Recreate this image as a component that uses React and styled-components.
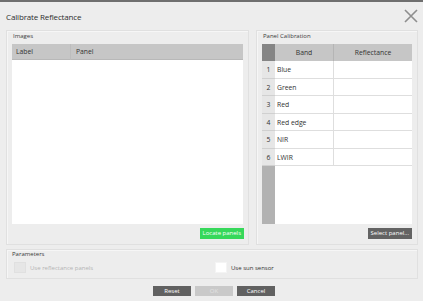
import styled, { createGlobalStyle } from 'styled-components';

const GlobalStyle = createGlobalStyle`
  html, body {
    margin: 0;
    padding: 0;
    background: #ededed;
  }
  * {
    box-sizing: border-box;
  }
`;

const bands = ['Blue', 'Green', 'Red', 'Red edge', 'NIR', 'LWIR'];

const App = () => {
  return (
    <Dialog>
      <GlobalStyle />
      <TitleBar>
        <Title>Calibrate Reflectance</Title>
        <CloseButton>
          <svg width="14" height="14" viewBox="0 0 14 14">
            <path d="M1 1 L13 13 M13 1 L1 13" stroke="#8e8e8e" strokeWidth="1.6" fill="none" />
          </svg>
        </CloseButton>
      </TitleBar>

      <Main>
        <Group width="243px">
          <GroupTitle>Images</GroupTitle>
          <ImagesTable>
            <ImagesHeader>
              <HeadCell first>Label</HeadCell>
              <HeadCell>Panel</HeadCell>
            </ImagesHeader>
          </ImagesTable>
          <GroupFooter>
            <SmallButton variant="green">Locate panels</SmallButton>
          </GroupFooter>
        </Group>

        <Group width="162px">
          <GroupTitle>Panel Calibration</GroupTitle>
          <BandTable>
            <Corner />
            <BandHead>Band</BandHead>
            <BandHead last>Reflectance</BandHead>
            {bands.map((b, i) => (
              <BandRow key={b}>
                <RowNum>{i + 1}</RowNum>
                <BandCell>{b}</BandCell>
                <BandCell last />
              </BandRow>
            ))}
            <Filler>
              <FillerStrip />
              <div />
            </Filler>
          </BandTable>
          <GroupFooter>
            <SmallButton variant="dark">Select panel...</SmallButton>
          </GroupFooter>
        </Group>
      </Main>

      <Params>
        <ParamsTitle>Parameters</ParamsTitle>
        <ParamsBody>
          <CheckWrap>
            <CheckBox disabled />
            <CheckLabel disabled>Use reflectance panels</CheckLabel>
          </CheckWrap>
          <CheckWrap>
            <CheckBox />
            <CheckLabel>Use sun sensor</CheckLabel>
          </CheckWrap>
        </ParamsBody>
      </Params>

      <ButtonBar>
        <DialogButton>Reset</DialogButton>
        <DialogButton disabled>OK</DialogButton>
        <DialogButton>Cancel</DialogButton>
      </ButtonBar>
    </Dialog>
  );
};
export default App;

const Dialog = styled.div`
  width: 423px;
  height: 301px;
  border-top: 2px solid #6f6f6f;
  background: #ededed;
  padding: 0 5px 0 6px;
  display: flex;
  flex-direction: column;
  font-family: 'Open Sans', 'Noto Sans', sans-serif;
  color: #333;
  overflow: hidden;
`;

const TitleBar = styled.div`
  height: 28px;
  display: flex;
  align-items: center;
  justify-content: space-between;
`;

const Title = styled.div`
  font-size: 8px;
  color: #2e2e2e;
  letter-spacing: -0.15px;
`;

const CloseButton = styled.div`
  width: 14px;
  height: 14px;
  display: flex;
`;

const Main = styled.div`
  display: flex;
  gap: 7px;
  height: 215px;
`;

const Group = styled.div`
  width: ${(p) => p.width};
  border: 1px solid #e0e0e0;
  box-shadow: inset 1px 1px 0 #f6f6f6;
  padding: 0 5px;
  display: flex;
  flex-direction: column;
`;

const GroupTitle = styled.div`
  height: 13px;
  line-height: 11px;
  font-size: 6px;
  color: #3a3a3a;
  padding-left: 1px;
`;

const GroupFooter = styled.div`
  flex: 1;
  display: flex;
  justify-content: flex-end;
  align-items: flex-start;
  padding-top: 4px;
`;

const SmallButton = styled.div`
  height: 11px;
  line-height: 11px;
  padding: 0 3px;
  font-size: 6px;
  color: #fff;
  background: ${(p) => (p.variant === 'green' ? '#36d85a' : '#636363')};
  margin-right: ${(p) => (p.variant === 'green' ? '-1px' : '0')};
`;

const ImagesTable = styled.div`
  height: 180px;
  background: #fff;
  display: flex;
  flex-direction: column;
`;

const ImagesHeader = styled.div`
  height: 16px;
  background: #c6c6c6;
  border-bottom: 1px solid #b8b8b8;
  display: grid;
  grid-template-columns: 59px 1fr;
`;

const HeadCell = styled.div`
  font-size: 6.8px;
  line-height: 16px;
  color: #333;
  padding-left: ${(p) => (p.first ? '4px' : '5px')};
  border-right: ${(p) => (p.first ? '1px solid #bdbdbd' : 'none')};
`;

const BandTable = styled.div`
  height: 180px;
  background: #fff;
  display: grid;
  grid-template-columns: 13px 59px 1fr;
  grid-template-rows: 17px repeat(6, 17.5px) 1fr;
`;

const Corner = styled.div`
  background: #858585;
`;

const BandHead = styled.div`
  background: #c6c6c6;
  font-size: 6.8px;
  line-height: 17px;
  text-align: center;
  color: #333;
  border-right: ${(p) => (p.last ? 'none' : '1px solid #b5b5b5')};
`;

const BandRow = styled.div`
  display: contents;
`;

const RowNum = styled.div`
  background: #e6e6e6;
  border-bottom: 1px solid #d0d0d0;
  font-size: 6.8px;
  line-height: 17px;
  text-align: center;
  color: #333;
`;

const BandCell = styled.div`
  border-bottom: 1px solid #dedede;
  border-right: ${(p) => (p.last ? 'none' : '1px solid #dedede')};
  font-size: 6.8px;
  line-height: 17px;
  padding-left: 2px;
  color: #333;
`;

const Filler = styled.div`
  grid-column: 1 / -1;
  display: grid;
  grid-template-columns: 13px 1fr;
`;

const FillerStrip = styled.div`
  background: #b2b2b2;
`;

const Params = styled.div`
  margin-top: 4px;
  height: 30px;
  border: 1px solid #e0e0e0;
  box-shadow: inset 1px 1px 0 #f6f6f6;
  display: flex;
  flex-direction: column;
`;

const ParamsTitle = styled.div`
  height: 9px;
  line-height: 8px;
  font-size: 6px;
  color: #3a3a3a;
  padding-left: 5px;
`;

const ParamsBody = styled.div`
  flex: 1;
  display: flex;
  align-items: center;
  padding-left: 7px;
  padding-bottom: 2px;
`;

const CheckWrap = styled.div`
  display: flex;
  align-items: center;
  gap: 4px;
  width: 201px;
`;

const CheckBox = styled.div`
  width: 12px;
  height: 11px;
  background: ${(p) => (p.disabled ? '#e6e6e6' : '#fff')};
  border: 1px solid ${(p) => (p.disabled ? '#e0e0e0' : '#f4f4f4')};
`;

const CheckLabel = styled.div`
  font-size: 6px;
  color: ${(p) => (p.disabled ? '#b4b4b4' : '#333')};
`;

const ButtonBar = styled.div`
  flex: 1;
  display: flex;
  justify-content: center;
  align-items: flex-start;
  gap: 4px;
  padding-top: 7px;
  padding-left: 4px;
`;

const DialogButton = styled.div`
  width: 38px;
  height: 10px;
  line-height: 10px;
  text-align: center;
  font-size: 6px;
  color: ${(p) => (p.disabled ? '#e2e2e2' : '#fff')};
  background: ${(p) => (p.disabled ? '#c9c9c9' : '#616161')};
`;
